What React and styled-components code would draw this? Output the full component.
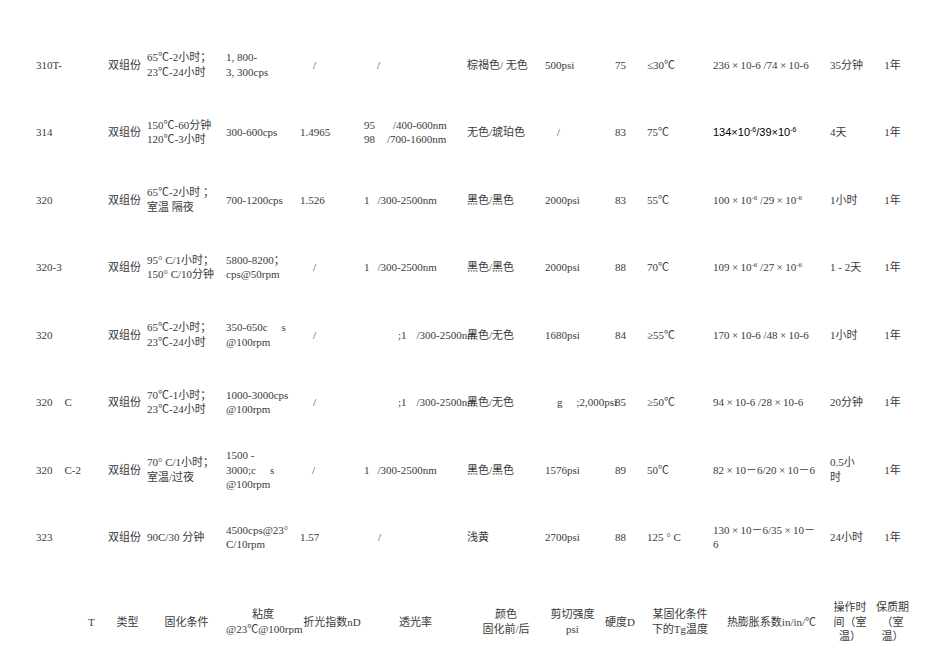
import styled, { createGlobalStyle } from "styled-components";

const GlobalStyle = createGlobalStyle`
	body {
		margin: 0;
		background: #ffffff;
		font-family: "Liberation Serif", "Noto Sans CJK SC", serif;
		font-size: 11px;
		color: #3a3a3a;
	}
`;

const COLS = "72px 39px 79px 74px 64px 103px 78px 55px 47px 66px 117px 40px 45px";

const Page = styled.div`
	padding: 31px 0 0 36px;
	width: 950px;
	box-sizing: border-box;
`;

const Row = styled.div`
	display: grid;
	grid-template-columns: ${COLS};
	height: 67.5px;
	align-items: center;
	margin-top: ${(p) => (p.$head ? "17px" : "0")};
`;

const Cell = styled.div`
	padding-left: ${(p) => p.$pad || 0}px;
	text-align: ${(p) => (p.$center ? "center" : "left")};
	white-space: nowrap;
	line-height: 14.5px;
	min-width: 0;
`;

const Gap = styled.span`
	display: inline-block;
	width: ${(p) => p.$w}px;
`;

const Cross = styled.span`
	display: inline-block;
	width: 11px;
	text-align: center;
`;

const Sup = styled.sup`
	font-size: 7px;
	vertical-align: 4px;
	line-height: 0;
`;

const SansNote = styled.span`
	font-family: "Liberation Sans", Arial, sans-serif;
	color: #000000;
	font-size: 11px;
`;

const x = <Cross>×</Cross>;

const rows = [
	[
		"310T-",
		"双组份",
		<>65℃-2小时；<br />23℃-24小时</>,
		<>1, 800-<br />3, 300cps</>,
		{ pad: 13, v: "/" },
		{ pad: 13, v: "/" },
		"棕褐色/ 无色",
		"500psi",
		{ pad: 15, v: "75" },
		"≤30℃",
		<>236{x}10-6 /74{x}10-6</>,
		"35分钟",
		{ center: true, v: "1年" },
	],
	[
		"314",
		"双组份",
		<>150℃-60分钟<br />120℃-3小时</>,
		"300-600cps",
		"1.4965",
		<>95<Gap $w={18} />/400-600nm<br />98<Gap $w={12} />/700-1600nm</>,
		"无色/琥珀色",
		{ pad: 12, v: "/" },
		{ pad: 15, v: "83" },
		"75℃",
		<SansNote>134×10<Sup>-6</Sup>/39×10<Sup>-6</Sup></SansNote>,
		"4天",
		{ center: true, v: "1年" },
	],
	[
		"320",
		"双组份",
		<>65℃-2小时 ；<br />室温 隔夜</>,
		"700-1200cps",
		"1.526",
		<>1<Gap $w={8} />/300-2500nm</>,
		"黑色/黑色",
		"2000psi",
		{ pad: 15, v: "83" },
		"55℃",
		<>100{x}10<Sup>-6</Sup> /29{x}10<Sup>-6</Sup></>,
		"1小时",
		{ center: true, v: "1年" },
	],
	[
		"320-3",
		"双组份",
		<>95° C/1小时；<br />150° C/10分钟</>,
		<>5800-8200；<br />cps@50rpm</>,
		{ pad: 13, v: "/" },
		<>1<Gap $w={8} />/300-2500nm</>,
		"黑色/黑色",
		"2000psi",
		{ pad: 15, v: "88" },
		"70℃",
		<>109{x}10<Sup>-6</Sup> /27{x}10<Sup>-6</Sup></>,
		"1 - 2天",
		{ center: true, v: "1年" },
	],
	[
		"320",
		"双组份",
		<>65℃-2小时；<br />23℃-24小时</>,
		<>350-650c<Gap $w={14} />s<br />@100rpm</>,
		{ pad: 13, v: "/" },
		{ pad: 34, v: <>;1<Gap $w={10} />/300-2500nm</> },
		"黑色/无色",
		"1680psi",
		{ pad: 15, v: "84" },
		"≥55℃",
		<>170{x}10-6 /48{x}10-6</>,
		"1小时",
		{ center: true, v: "1年" },
	],
	[
		<>320<Gap $w={12} />C</>,
		"双组份",
		<>70℃-1小时；<br />23℃-24小时</>,
		<>1000-3000cps<br />@100rpm</>,
		{ pad: 13, v: "/" },
		{ pad: 34, v: <>;1<Gap $w={10} />/300-2500nm</> },
		"黑色/无色",
		{ pad: 12, v: <>g<Gap $w={14} />;2,000psi</> },
		{ pad: 15, v: "85" },
		"≥50℃",
		<>94{x}10-6 /28{x}10-6</>,
		"20分钟",
		{ center: true, v: "1年" },
	],
	[
		<>320<Gap $w={12} />C-2</>,
		"双组份",
		<>70° C/1小时；<br />室温/过夜</>,
		<>1500 -<br />3000;c<Gap $w={14} />s<br />@100rpm</>,
		{ pad: 12, v: "/" },
		<>1<Gap $w={8} />/300-2500nm</>,
		"黑色/黑色",
		"1576psi",
		{ pad: 15, v: "89" },
		"50℃",
		<>82{x}10－6/20{x}10－6</>,
		<>0.5小<br />时</>,
		{ center: true, v: "1年" },
	],
	[
		"323",
		"双组份",
		"90C/30 分钟",
		<>4500cps@23°<br />C/10rpm</>,
		"1.57",
		{ pad: 14, v: "/" },
		"浅黄",
		"2700psi",
		{ pad: 15, v: "88" },
		"125 ° C",
		<>130{x}10－6/35{x}10－<br />6</>,
		"24小时",
		{ center: true, v: "1年" },
	],
];

const head = [
	{ pad: 52, v: "T" },
	{ center: true, v: "类型" },
	{ center: true, v: "固化条件" },
	{ center: true, v: <>粘度<br />@23℃@100rpm</> },
	{ center: true, v: "折光指数nD" },
	{ center: true, v: "透光率" },
	{ center: true, v: <>颜色<br />固化前/后</> },
	{ center: true, v: <>剪切强度<br />psi</> },
	{ pad: 5, v: "硬度D" },
	{ center: true, v: <>某固化条件<br />下的Tg温度</> },
	{ center: true, v: "热膨胀系数in/in/℃" },
	{ center: true, v: <>操作时<br />间（室<br />温）</> },
	{ center: true, v: <>保质期<br />（室<br />温）</> },
];

function toCell(c, i) {
	if (c && typeof c === "object" && "v" in c) {
		return (
			<Cell key={i} $pad={c.pad} $center={c.center}>
				{c.v}
			</Cell>
		);
	}
	return <Cell key={i}>{c}</Cell>;
}

export default function App() {
	return (
		<Page>
			<GlobalStyle />
			{rows.map((r, i) => (
				<Row key={i}>{r.map(toCell)}</Row>
			))}
			<Row $head>{head.map(toCell)}</Row>
		</Page>
	);
}
